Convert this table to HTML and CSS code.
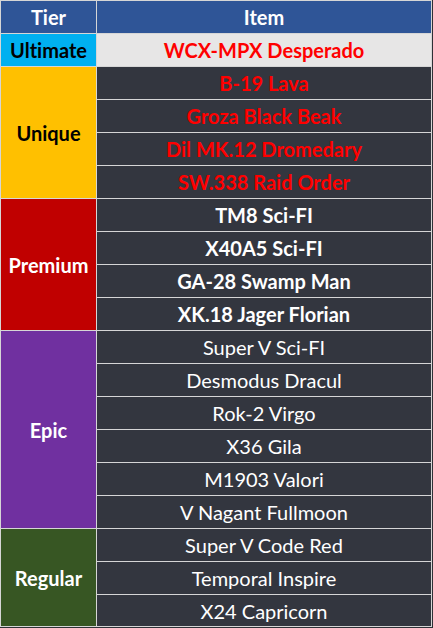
FILE: index.html
```html
<!DOCTYPE html>
<html lang="en">
<head>
<meta charset="utf-8">
<title>Tier list</title>
<link rel="stylesheet" href="styles.css">
</head>
<body>
<div class="tier-table">
  <div class="cell head">Tier</div>
  <div class="cell head">Item</div>

  <div class="cell tier ultimate">Ultimate</div>
  <div class="cell item light red bold">WCX-MPX Desperado</div>

  <div class="cell tier unique span-4">Unique</div>
  <div class="cell item red bold">B-19 Lava</div>
  <div class="cell item red bold">Groza Black Beak</div>
  <div class="cell item red bold">Dil MK.12 Dromedary</div>
  <div class="cell item red bold">SW.338 Raid Order</div>

  <div class="cell tier premium span-4">Premium</div>
  <div class="cell item bold">TM8 Sci-FI</div>
  <div class="cell item bold">X40A5 Sci-FI</div>
  <div class="cell item bold">GA-28 Swamp Man</div>
  <div class="cell item bold">XK.18 Jager Florian</div>

  <div class="cell tier epic span-6">Epic</div>
  <div class="cell item">Super V Sci-FI</div>
  <div class="cell item">Desmodus Dracul</div>
  <div class="cell item">Rok-2 Virgo</div>
  <div class="cell item">X36 Gila</div>
  <div class="cell item">M1903 Valori</div>
  <div class="cell item">V Nagant Fullmoon</div>

  <div class="cell tier regular span-3">Regular</div>
  <div class="cell item">Super V Code Red</div>
  <div class="cell item">Temporal Inspire</div>
  <div class="cell item">X24 Capricorn</div>
</div>
</body>
</html>
```

FILE: styles.css
```css
html, body {
  margin: 0;
  padding: 0;
  background: #2e3036;
}

.tier-table {
  display: grid;
  grid-template-columns: 95px 334px;
  grid-template-rows: 32px repeat(17, 32px) 31px;
  gap: 1px;
  padding: 1px;
  width: 430px;
  background: #d6d6d6;
  font-family: "Lato", "Liberation Sans", sans-serif;
  font-size: 20px;
  font-variant-ligatures: none;
}

.cell {
  display: flex;
  align-items: center;
  justify-content: center;
  color: #ffffff;
  white-space: nowrap;
}

.head {
  background: #2f5597;
  font-weight: 700;
}

.tier {
  font-weight: 700;
}

.ultimate { background: #00b0f0; color: #000; }
.unique { background: #ffc000; color: #000; }
.premium { background: #c00000; }
.epic { background: #7030a0; }
.regular { background: #375623; }

.span-3 { grid-row: span 3; }
.span-4 { grid-row: span 4; }
.span-6 { grid-row: span 6; }

.item {
  background: #33363f;
}

.item.light { background: #e7e6e6; }
.red { color: #ff0000; }
.bold { font-weight: 700; }
```
